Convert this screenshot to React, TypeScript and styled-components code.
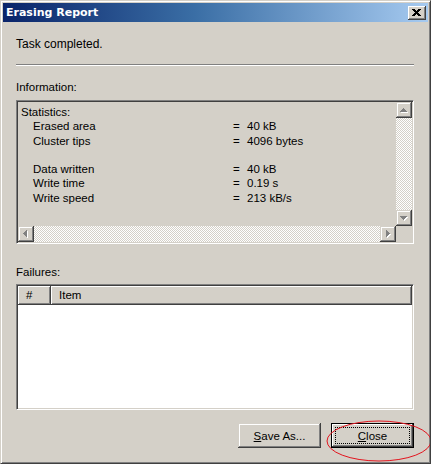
import React from "react";
import styled, { createGlobalStyle } from "styled-components";

const GlobalStyle = createGlobalStyle`
  html, body {
    margin: 0;
    padding: 0;
    background: #ffffff;
  }
  body {
    font-family: "Liberation Sans", Arial, sans-serif;
    font-size: 11.5px;
    color: #000;
  }
`;

type Dir = "up" | "down" | "left" | "right";

const arrowRects: Record<Dir, number[][]> = {
  up: [[7, 6, 1, 1], [6, 7, 3, 1], [5, 8, 5, 1], [4, 9, 7, 1]],
  down: [[4, 6, 7, 1], [5, 7, 5, 1], [6, 8, 3, 1], [7, 9, 1, 1]],
  left: [[5, 7, 1, 1], [6, 6, 1, 3], [7, 5, 1, 5], [8, 4, 1, 7]],
  right: [[6, 4, 1, 7], [7, 5, 1, 5], [8, 6, 1, 3], [9, 7, 1, 1]],
};

const Arrow = ({ dir }: { dir: Dir }) => (
  <svg width="16" height="16" viewBox="0 0 16 16" shapeRendering="crispEdges">
    {arrowRects[dir].map(([x, y, w, h], i) => (
      <rect key={"s" + i} x={x + 1} y={y + 1} width={w} height={h} fill="#ffffff" />
    ))}
    {arrowRects[dir].map(([x, y, w, h], i) => (
      <rect key={"a" + i} x={x} y={y} width={w} height={h} fill="#808080" />
    ))}
  </svg>
);

const stats = [
  { label: "Statistics:", indent: false },
  { label: "Erased area", value: "40 kB", indent: true },
  { label: "Cluster tips", value: "4096 bytes", indent: true },
  { label: "", indent: true },
  { label: "Data written", value: "40 kB", indent: true },
  { label: "Write time", value: "0.19 s", indent: true },
  { label: "Write speed", value: "213 kB/s", indent: true },
];

export default function App() {
  return (
    <>
      <GlobalStyle />
      <Window>
        <TitleBar>
          <Title>Erasing Report</Title>
          <CaptionButton>
            <svg width="9" height="7" viewBox="0 0 9 7" shapeRendering="crispEdges">
              <path d="M0 0h3v1h-3zM6 0h3v1h-3zM1 1h3v1h-3zM5 1h3v1h-3zM2 2h5v1h-5zM3 3h3v1h-3zM2 4h5v1h-5zM1 5h3v1h-3zM5 5h3v1h-3zM0 6h3v1h-3zM6 6h3v1h-3z" fill="#000" />
            </svg>
          </CaptionButton>
        </TitleBar>

        <Body>
          <Status>Task completed.</Status>
          <Separator />

          <Label $gap={14}>Information:</Label>
          <InfoBox>
            <InfoText>
              {stats.map((row, i) => (
                <StatRow key={i}>
                  <StatLabel $indent={row.indent}>{row.label}</StatLabel>
                  {row.value && (
                    <>
                      <span>=</span>
                      <span>{row.value}</span>
                    </>
                  )}
                </StatRow>
              ))}
            </InfoText>
            <VScroll>
              <ScrollButton><Arrow dir="up" /></ScrollButton>
              <Track />
              <ScrollButton><Arrow dir="down" /></ScrollButton>
            </VScroll>
            <HScroll>
              <ScrollButton><Arrow dir="left" /></ScrollButton>
              <Track />
              <ScrollButton><Arrow dir="right" /></ScrollButton>
            </HScroll>
            <SizeBox />
          </InfoBox>

          <Label $gap={21}>Failures:</Label>
          <ListView>
            <HeaderRow>
              <HeaderCell $width={33}>#</HeaderCell>
              <HeaderCell>Item</HeaderCell>
            </HeaderRow>
          </ListView>

          <ButtonRow>
            <PushButton>
              <u>S</u>ave As...
            </PushButton>
            <PushButton $default>
              <Focus>
                <u>C</u>lose
              </Focus>
            </PushButton>
          </ButtonRow>
        </Body>

        <Annotation width="431" height="464" viewBox="0 0 431 464">
          <ellipse cx="379" cy="441" rx="52" ry="20" fill="none" stroke="#e3141e" strokeWidth="1" />
        </Annotation>
      </Window>
    </>
  );
}

const Window = styled.div`
  position: relative;
  width: 431px;
  height: 464px;
  box-sizing: border-box;
  background: #d4d0c8;
  border: 1px solid;
  border-color: #d4d0c8 #404040 #404040 #d4d0c8;
  box-shadow: inset 1px 1px #ffffff, inset -1px -1px #808080;
  padding: 2px;
  display: flex;
  flex-direction: column;
  overflow: hidden;
`;

const TitleBar = styled.div`
  height: 19px;
  display: flex;
  align-items: center;
  justify-content: space-between;
  padding: 0 2px 0 3px;
  background: linear-gradient(to right, #0a246a 0%, #3a6ea5 45%, #a6caf0 100%);
`;

const Title = styled.span`
  font-family: "DejaVu Sans", Tahoma, sans-serif;
  font-weight: bold;
  font-size: 11px;
  color: #ffffff;
`;

const CaptionButton = styled.div`
  width: 18px;
  height: 14px;
  box-sizing: border-box;
  display: flex;
  align-items: center;
  justify-content: center;
  background: #d4d0c8;
  box-shadow: inset -1px -1px #404040, inset 1px 1px #ffffff, inset -2px -2px #808080;
  padding-right: 1px;
`;

const Body = styled.div`
  flex: 1;
  display: flex;
  flex-direction: column;
  padding: 0 14px 0 13px;
`;

const Status = styled.div`
  margin-top: 15px;
  font-size: 12px;
  line-height: 14px;
`;

const Separator = styled.div`
  margin-top: 13px;
  height: 1px;
  background: #808080;
  border-bottom: 1px solid #ffffff;
`;

const Label = styled.div<{ $gap: number }>`
  margin-top: ${(p) => p.$gap}px;
  line-height: 14px;
  margin-bottom: 6px;
`;

const sunken = `
  border: 1px solid;
  border-color: #808080 #ffffff #ffffff #808080;
  box-shadow: inset 1px 1px #404040, inset -1px -1px #d4d0c8;
  padding: 1px;
  box-sizing: border-box;
`;

const raised = `
  background: #d4d0c8;
  box-shadow: inset -1px -1px #404040, inset 1px 1px #d4d0c8, inset -2px -2px #808080, inset 2px 2px #ffffff;
`;

const InfoBox = styled.div`
  ${sunken}
  height: 144px;
  display: grid;
  grid-template-columns: 1fr 16px;
  grid-template-rows: 1fr 16px;
  background: #d4d0c8;
`;

const InfoText = styled.div`
  padding: 3px 0 0 3px;
  line-height: 14.3px;
  overflow: hidden;
`;

const StatRow = styled.div`
  display: grid;
  grid-template-columns: 212px 14px 1fr;
  height: 14.3px;
  white-space: nowrap;
`;

const StatLabel = styled.span<{ $indent: boolean }>`
  padding-left: ${(p) => (p.$indent ? 12 : 0)}px;
`;

const VScroll = styled.div`
  display: flex;
  flex-direction: column;
`;

const HScroll = styled.div`
  display: flex;
`;

const ScrollButton = styled.div`
  ${raised}
  width: 16px;
  height: 16px;
  flex: none;
  display: flex;
  svg {
    display: block;
  }
`;

const Track = styled.div`
  flex: 1;
  background: repeating-conic-gradient(#ffffff 0 25%, #d4d0c8 0 50%) 0 0 / 2px 2px;
`;

const SizeBox = styled.div`
  background: #d4d0c8;
`;

const ListView = styled.div`
  ${sunken}
  height: 126px;
  background: #ffffff;
  margin-top: -1px;
`;

const HeaderRow = styled.div`
  display: flex;
  height: 19px;
`;

const HeaderCell = styled.div<{ $width?: number }>`
  background: #d4d0c8;
  box-shadow: inset -1px -1px #404040, inset 1px 1px #ffffff, inset -2px -2px #808080;
  ${(p) => (p.$width ? `width: ${p.$width}px; flex: none;` : "flex: 1;")}
  padding: 1px 0 0 8px;
  box-sizing: border-box;
  line-height: 17px;
`;

const ButtonRow = styled.div`
  display: flex;
  justify-content: flex-end;
  gap: 10px;
  margin-top: 13px;
`;

const PushButton = styled.div<{ $default?: boolean }>`
  ${raised}
  width: 83px;
  height: 25px;
  box-sizing: border-box;
  display: flex;
  align-items: center;
  justify-content: center;
  line-height: 14px;
  ${(p) =>
    p.$default
      ? `border: 1px solid #000;
         box-shadow: inset -1px -1px #404040, inset 1px 1px #ffffff, inset -2px -2px #808080;
         padding: 3px;`
      : ""}
  u {
    text-decoration-thickness: 1px;
    text-underline-offset: 1px;
  }
`;

const Focus = styled.span`
  flex: 1;
  align-self: stretch;
  display: flex;
  align-items: center;
  justify-content: center;
  outline: 1px dotted #000;
  outline-offset: -1px;
`;

const Annotation = styled.svg`
  position: absolute;
  left: -1px;
  top: -1px;
  pointer-events: none;
`;
